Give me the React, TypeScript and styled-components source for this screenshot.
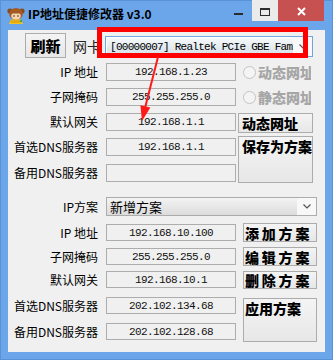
import React from "react";
import styled, { createGlobalStyle } from "styled-components";

const CJK = `"Noto Sans CJK SC", "Noto Sans", sans-serif`;
const MONO = `"Liberation Mono", "DejaVu Sans Mono", monospace`;

const Global = createGlobalStyle`
  html, body { margin: 0; padding: 0; width: 333px; height: 360px; overflow: hidden; background: #6ca6ea; }
  * { box-sizing: border-box; }
`;

const Window = styled.div`
  position: relative;
  width: 333px;
  height: 360px;
  background: #6ca6ea;
  padding: 0 8px 8px;
  display: flex;
  flex-direction: column;
  box-shadow: inset 0 0 0 1px #5a92d4;
`;

const TitleBar = styled.div`
  height: 30px;
  margin: 0 -8px;
  padding: 0 9px 0 7px;
  display: flex;
  align-items: flex-start;
  flex: none;
`;

const AppIcon = styled.svg`
  margin-top: 6px;
  flex: none;
`;

const Title = styled.div`
  margin: 6px 0 0 3px;
  font: bold 12px/16px ${CJK};
  color: #000;
  flex: 1;
  white-space: nowrap;
`;

const Controls = styled.div`
  display: flex;
  flex: none;
`;

const CtrlBtn = styled.div<{ $w: number; $bg: string }>`
  width: ${(p) => p.$w}px;
  height: 21px;
  background: ${(p) => p.$bg};
  display: flex;
  justify-content: center;
  align-items: flex-start;
`;

const MinDash = styled.div`
  width: 9px;
  height: 2px;
  margin-top: 13px;
  background: #2b2b2b;
`;

const MaxBox = styled.div`
  width: 10px;
  height: 8px;
  margin-top: 8px;
  border: 1px solid #2b2b2b;
  border-top-width: 2px;
`;

const CloseIcon = styled.svg`
  margin-top: 7px;
`;

const Client = styled.div`
  flex: 1;
  background: #f0f0f0;
  display: flex;
  flex-direction: column;
  padding-top: 3px;
  font-family: ${CJK};
  color: #000;
`;

const HeaderRow = styled.div`
  display: flex;
  align-items: flex-start;
  height: 25px;
  padding-left: 17px;
`;

const Btn = styled.div<{ $w?: number; $h: number; $mt?: number; $ls?: number; $pl?: number; $top?: boolean; $col?: boolean; $fs?: number }>`
  ${(p) => (p.$col ? "grid-column: 3;" : "")}
  width: ${(p) => (p.$w ? `${p.$w}px` : "100%")};
  height: ${(p) => p.$h}px;
  margin-top: ${(p) => p.$mt ?? 0}px;
  align-self: start;
  border: 1px solid #acacac;
  background: linear-gradient(#f4f4f4, #e7e7e7);
  display: flex;
  align-items: ${(p) => (p.$top ? "flex-start" : "center")};
  justify-content: ${(p) => (p.$pl === undefined ? "center" : "flex-start")};
  padding-left: ${(p) => p.$pl ?? 0}px;
  padding-top: ${(p) => (p.$top ? 1 : 0)}px;
  font: 900 ${(p) => p.$fs ?? 14}px/16px ${CJK};
  letter-spacing: ${(p) => p.$ls ?? 0}px;
  white-space: nowrap;
  overflow: hidden;
`;

const NicLabel = styled.span`
  width: 32px;
  margin: 3px 0 0 7px;
  font-size: 14px;
  line-height: 20px;
  color: #222;
`;

const Combo = styled.div<{ $w: number; $h: number; $mt?: number; $focus?: boolean }>`
  width: ${(p) => p.$w}px;
  height: ${(p) => p.$h}px;
  margin-top: ${(p) => p.$mt ?? 0}px;
  border: 1px solid ${(p) => (p.$focus ? "#6fa6de" : "#acacac")};
  display: flex;
  background: #fff;
`;

const ComboField = styled.div<{ $focus?: boolean; $mono?: boolean }>`
  flex: 1;
  margin: ${(p) => (p.$focus ? "1px 0 1px 1px" : "0")};
  background: ${(p) => (p.$focus ? "linear-gradient(#f5f8fa, #d6e1e9)" : "linear-gradient(#f3f3f3, #dcdcdc)")};
  padding-left: 3px;
  display: flex;
  align-items: center;
  overflow: hidden;
  white-space: nowrap;
  font: ${(p) => (p.$mono ? `11px/14px ${MONO}` : `13px/16px ${CJK}`)};
  letter-spacing: ${(p) => (p.$mono ? "-0.72px" : "0")};
`;

const ComboArrow = styled.div`
  width: 19px;
  flex: none;
  display: flex;
  align-items: center;
  justify-content: center;
  background: #f8f8f8;
`;

const Form = styled.div<{ $cols: string; $rows: string; $mt: number }>`
  display: grid;
  grid-template-columns: ${(p) => p.$cols};
  grid-template-rows: ${(p) => p.$rows};
  margin-top: ${(p) => p.$mt}px;
`;

const Label = styled.div<{ $h: number }>`
  grid-column: 1;
  height: ${(p) => p.$h}px;
  padding-right: 8px;
  display: flex;
  align-items: center;
  justify-content: flex-end;
  font-size: 12px;
  line-height: 14px;
  white-space: nowrap;
`;

const Field = styled.div<{ $h: number }>`
  grid-column: 2;
  width: 130px;
  height: ${(p) => p.$h}px;
  border: 1px solid #adadad;
  background: #f0f0f0;
  display: flex;
  align-items: center;
  justify-content: center;
  font: 11px/14px ${MONO};
  letter-spacing: -0.6px;
  color: #111;
`;

const Radio = styled.div`
  grid-column: 3;
  width: 73px;
  height: 18px;
  padding-left: 5px;
  display: flex;
  align-items: center;
  gap: 2px;
  overflow: hidden;
  white-space: nowrap;
  font: 900 14px/16px ${CJK};
  color: #a6a6a6;
`;

const RadioDot = styled.span`
  width: 13px;
  height: 13px;
  flex: none;
  border-radius: 50%;
  border: 1px solid #c4c4c4;
  background: #f4f4f4;
`;

const ComboRow = styled.div`
  display: grid;
  grid-template-columns: 98px 211px;
  margin-top: 15px;
`;

const RedBox = styled.div`
  position: absolute;
  left: 97px;
  top: 27px;
  width: 211px;
  height: 31px;
  border: 5px solid #ff0000;
  pointer-events: none;
`;

const Overlay = styled.svg`
  position: absolute;
  left: 0;
  top: 0;
  pointer-events: none;
`;

const Chevron = () => (
  <svg width="8" height="5" viewBox="0 0 8 5">
    <polyline points="0.5,0.5 4,4 7.5,0.5" fill="none" stroke="#555" strokeWidth="1.2" />
  </svg>
);

const rows1 = [
  ["IP 地址", "192.168.1.23"],
  ["子网掩码", "255.255.255.0"],
  ["默认网关", "192.168.1.1"],
  ["首选DNS服务器", "192.168.1.1"],
  ["备用DNS服务器", ""],
];

const rows2 = [
  ["IP 地址", "192.168.10.100"],
  ["子网掩码", "255.255.255.0"],
  ["默认网关", "192.168.10.1"],
  ["首选DNS服务器", "202.102.134.68"],
  ["备用DNS服务器", "202.102.128.68"],
];

export default function App() {
  return (
    <>
      <Global />
      <Window>
        <TitleBar>
          <AppIcon width="18" height="18" viewBox="0 0 18 18">
            <circle cx="3" cy="5" r="2.6" fill="#8a4a1c" />
            <circle cx="15" cy="5" r="2.6" fill="#8a4a1c" />
            <ellipse cx="9" cy="8" rx="6.8" ry="6" fill="#a65a24" />
            <ellipse cx="9" cy="10" rx="4.8" ry="3.8" fill="#f8d6ae" />
            <rect x="5" y="5" width="8" height="2.5" fill="#a65a24" />
            <circle cx="7" cy="10" r="0.8" fill="#333" />
            <circle cx="11" cy="10" r="0.8" fill="#333" />
            <path d="M2 18 L4 13.5 H14 L16 18 Z" fill="#f2c21f" />
            <ellipse cx="9" cy="15.5" rx="6" ry="1.6" fill="#e6a814" />
            <circle cx="14" cy="15" r="1.2" fill="#3fae3a" />
          </AppIcon>
          <Title>IP地址便捷修改器 v3.0</Title>
          <Controls>
            <CtrlBtn $w={27} $bg="transparent">
              <MinDash />
            </CtrlBtn>
            <CtrlBtn $w={26} $bg="#ebebeb">
              <MaxBox />
            </CtrlBtn>
            <CtrlBtn $w={46} $bg="#c75050">
              <CloseIcon width="9" height="9" viewBox="0 0 9 9">
                <path d="M1 1 L8 8 M8 1 L1 8" stroke="#fff" strokeWidth="2" />
              </CloseIcon>
            </CtrlBtn>
          </Controls>
        </TitleBar>

        <Client>
          <HeaderRow>
            <Btn $w={41} $h={25} $fs={15}>刷新</Btn>
            <NicLabel>网卡</NicLabel>
            <Combo $w={208} $h={21} $mt={3} $focus>
              <ComboField $focus $mono>[00000007] Realtek PCIe GBE Family Controller</ComboField>
              <ComboArrow>
                <Chevron />
              </ComboArrow>
            </Combo>
          </HeaderRow>

          <Form $cols="98px 132px 75px" $rows="25px 25px 25px 26px 18px" $mt={5}>
            {rows1.map(([l, v], i) => (
              <React.Fragment key={l}>
                <Label $h={18} style={{ gridRow: i + 1 }}>{l}</Label>
                <Field $h={18} style={{ gridRow: i + 1 }}>{v}</Field>
              </React.Fragment>
            ))}
            <Radio style={{ gridRow: 1 }}>
              <RadioDot />
              动态网址
            </Radio>
            <Radio style={{ gridRow: 2 }}>
              <RadioDot />
              静态网址
            </Radio>
            <Btn $col $h={20} $pl={3} style={{ gridRow: 3 }}>动态网址</Btn>
            <Btn $col $h={47} $mt={-2} $pl={3} $top style={{ gridRow: "4 / span 2" }}>保存为方案</Btn>
          </Form>

          <ComboRow>
            <Label $h={19}>IP方案</Label>
            <Combo $w={211} $h={19}>
              <ComboField>新增方案</ComboField>
              <ComboArrow>
                <Chevron />
              </ComboArrow>
            </Combo>
          </ComboRow>

          <Form $cols="98px 137px 74px" $rows="24px 23px 26px 26px 17px" $mt={8}>
            {rows2.map(([l, v], i) => (
              <React.Fragment key={l}>
                <Label $h={17} style={{ gridRow: i + 1 }}>{l}</Label>
                <Field $h={17} style={{ gridRow: i + 1 }}>{v}</Field>
              </React.Fragment>
            ))}
            <Btn $col $h={19} $mt={-1} $pl={1} $ls={2.8} style={{ gridRow: 1 }}>添加方案</Btn>
            <Btn $col $h={19} $mt={-1} $pl={1} $ls={2.8} style={{ gridRow: 2 }}>编辑方案</Btn>
            <Btn $col $h={18} $pl={1} $ls={2.8} style={{ gridRow: 3 }}>删除方案</Btn>
            <Btn $col $h={44} $mt={1} $pl={1} $top style={{ gridRow: "4 / span 2" }}>应用方案</Btn>
          </Form>
        </Client>

        <RedBox />
        <Overlay width="333" height="360" viewBox="0 0 333 360">
          <line x1="158" y1="57" x2="145" y2="108" stroke="#ff1a1a" strokeWidth="2" />
          <polygon points="142,121 150.4,107.6 140.4,105.2" fill="#ff1a1a" />
        </Overlay>
      </Window>
    </>
  );
}
